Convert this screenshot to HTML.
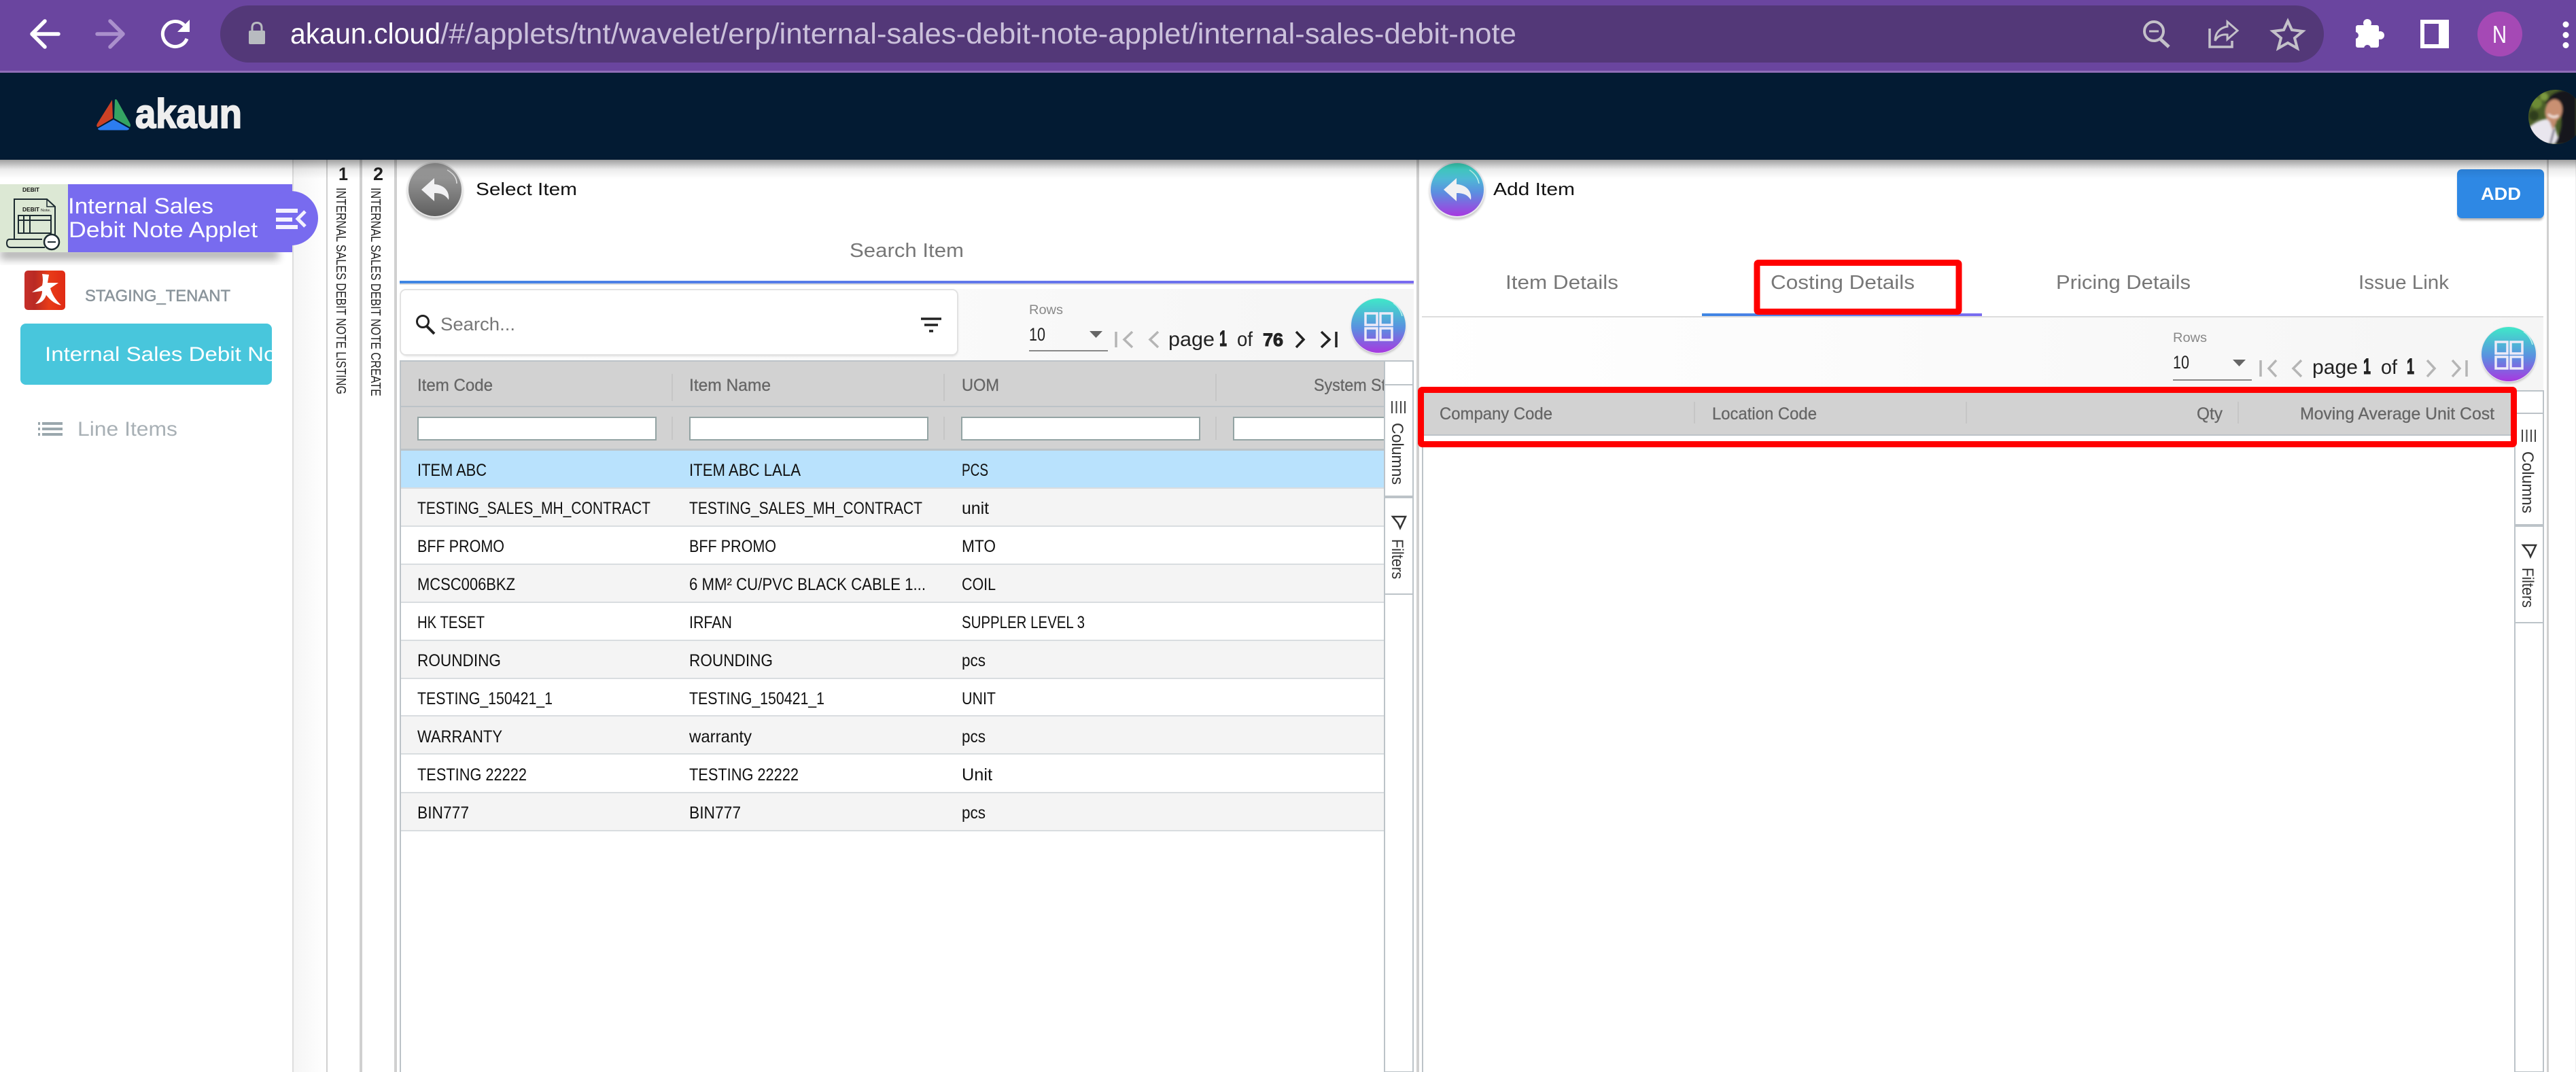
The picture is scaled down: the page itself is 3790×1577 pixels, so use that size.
<!DOCTYPE html>
<html lang="en">
<head>
<meta charset="utf-8">
<title>Internal Sales Debit Note</title>
<style>
html,body{margin:0;padding:0;background:#fff;width:3790px;height:1577px;overflow:hidden}
svg{display:block}
text{font-family:"Liberation Sans",sans-serif;white-space:pre}
.r{font-size:25px;fill:#111}
.h{font-size:25px;fill:#666;stroke:#666;stroke-width:.3px}
.t{font-size:29px;fill:#777}
.p{font-size:30px;fill:#222}
.b{font-size:32px;font-weight:bold;fill:#222;stroke:#222;stroke-width:1px}
.rw{font-size:19px;fill:#888}
.s{font-size:24px;fill:#333}
.v{font-size:20px;fill:#222}
</style>
</head>
<body>
<svg xmlns="http://www.w3.org/2000/svg" width="3790" height="1577" viewBox="0 0 3790 1577">
<defs>
<linearGradient id="gb" x1="0" y1="0" x2="1" y2="0"><stop offset="0" stop-color="#3f86e3"/><stop offset="1" stop-color="#7a6cf0"/></linearGradient>
<linearGradient id="gc" x1="0" y1="0" x2="0" y2="1"><stop offset="0" stop-color="#3fe8c8"/><stop offset=".55" stop-color="#5b8fe0"/><stop offset="1" stop-color="#a838e0"/></linearGradient>
<linearGradient id="gg" x1="0" y1="0" x2="0" y2="1"><stop offset="0" stop-color="#a8a8a8"/><stop offset="1" stop-color="#5f5f5f"/></linearGradient>
<linearGradient id="gs" x1="0" y1="0" x2="1" y2="0"><stop offset="0" stop-color="#fff"/><stop offset="1" stop-color="#f5f5f5"/></linearGradient>
<linearGradient id="gl" x1="0" y1="0" x2="1" y2="0"><stop offset="0" stop-color="#f5f5f5"/><stop offset="1" stop-color="#fff"/></linearGradient>
<linearGradient id="sh" x1="0" y1="0" x2="0" y2="1"><stop offset="0" stop-color="#000" stop-opacity=".38"/><stop offset=".5" stop-color="#000" stop-opacity=".08"/><stop offset="1" stop-color="#000" stop-opacity="0"/></linearGradient>
<linearGradient id="gt" x1="0" y1="0" x2="1" y2="0"><stop offset="0" stop-color="#c62f2a"/><stop offset=".25" stop-color="#b92a24"/><stop offset=".6" stop-color="#e83c18"/><stop offset="1" stop-color="#e02a14"/></linearGradient>
<filter id="bl" x="-20%" y="-50%" width="140%" height="200%"><feGaussianBlur stdDeviation="6"/></filter>
<filter id="b2" x="-30%" y="-30%" width="160%" height="160%"><feGaussianBlur stdDeviation="1.5"/></filter>
<clipPath id="ph"><circle cx="3760" cy="172" r="40"/></clipPath>
<clipPath id="tl"><rect x="30" y="476" width="370" height="90"/></clipPath>
<clipPath id="tb"><rect x="589" y="532" width="1447" height="130"/></clipPath>
<g id="reply"><path d="M-20 0L-1 -17V-8C14 -7 22 3 20 15C15 7 8 5 -1 5V17Z" fill="#f1f1f3"/></g>
<g id="grid"><circle cy="3" r="40" fill="#000" opacity=".22" filter="url(#b2)"/><circle r="41" fill="#e9e9ee"/><circle r="40" fill="url(#gc)"/><path d="M22 -33Q32 -26 35 -14" fill="none" stroke="#bdf5ee" stroke-width="1.5"/><g fill="none" stroke="#eceaf8" stroke-width="3.5"><rect x="-19" y="-18" width="17" height="17"/><rect x="3" y="-18" width="17" height="17"/><rect x="-19" y="4" width="17" height="17"/><rect x="3" y="4" width="17" height="17"/></g></g>
</defs>

<rect width="3790" height="1577" fill="#fff"/>

<!-- layout columns -->
<rect x="430" y="235" width="2" height="1342" fill="#ddd"/>
<rect x="432" y="235" width="48" height="1342" fill="url(#gl)"/>
<rect x="480" y="235" width="2" height="1342" fill="#d0d0d0"/>
<rect x="529" y="235" width="4" height="1342" fill="#d0d0d0"/>
<rect x="580" y="235" width="4" height="1342" fill="#d0d0d0"/>
<rect x="2084" y="235" width="4" height="1342" fill="#d0d0d0"/>
<rect x="3747" y="235" width="3" height="1342" fill="#d0d0d0"/>
<rect x="3789" y="235" width="1" height="1342" fill="#eee"/>

<!-- sidebar -->
<rect x="0" y="366" width="410" height="16" fill="#000" opacity=".3" filter="url(#bl)"/>
<rect x="100" y="271" width="330" height="100" fill="#786bef"/>
<circle cx="428" cy="321" r="40" fill="#786bef"/>
<rect x="0" y="271" width="100" height="100" fill="#dce8d4"/>
<text x="33" y="282" font-size="8" font-weight="bold" textLength="25" lengthAdjust="spacingAndGlyphs" fill="#111">DEBIT</text>
<path d="M21 352V293H69L81 304V345" fill="none" stroke="#1c2a30" stroke-width="2"/>
<path d="M69 293V304H81" fill="none" stroke="#1c2a30" stroke-width="1.5"/>
<text x="33" y="311" font-size="8" font-weight="bold" textLength="25" lengthAdjust="spacingAndGlyphs" fill="#111">DEBIT</text>
<text x="60" y="311" font-size="5" textLength="15" lengthAdjust="spacingAndGlyphs" fill="#222">Note.</text>
<path d="M27 317H75V343H27ZM27 324H75M35 317V343M44 317V343" fill="none" stroke="#1c2a30" stroke-width="2"/>
<path d="M62 352H14Q10 352 10 358Q10 364 16 364H66" fill="none" stroke="#1c2a30" stroke-width="2"/>
<circle cx="76" cy="356" r="11" fill="#fff" stroke="#1c2a30" stroke-width="2.5"/>
<path d="M70 356H82" stroke="#1c2a30" stroke-width="2"/>
<text x="100" y="314" font-size="32" fill="#fff" textLength="214" lengthAdjust="spacingAndGlyphs">Internal Sales</text>
<text x="101" y="349" font-size="32" fill="#fff" textLength="278" lengthAdjust="spacingAndGlyphs">Debit Note Applet</text>
<path d="M406 310H438M406 323H430M406 334H438" stroke="#f4f2ff" stroke-width="6"/>
<path d="M449 311L438 322L449 333" fill="none" stroke="#f4f2ff" stroke-width="5"/>

<rect x="36" y="398" width="60" height="58" rx="5" fill="url(#gt)"/>
<path d="M62 403L72 404L70 416L86 416L74 424Q78 438 90 449Q78 447 68 434Q64 446 52 447Q62 438 62 428L47 430L62 420Q64 412 62 403Z" fill="#fff"/>
<text x="125" y="443" font-size="24" fill="#8a949b" stroke="#8a949b" stroke-width=".5" textLength="214" lengthAdjust="spacingAndGlyphs">STAGING_TENANT</text>

<rect x="30" y="476" width="370" height="90" rx="8" fill="#48c6dc"/>
<g clip-path="url(#tl)"><text x="66" y="531" font-size="30" fill="#fff" textLength="368" lengthAdjust="spacingAndGlyphs">Internal Sales Debit Note</text></g>

<path d="M56 623H59M62 623H92M56 631H59M62 631H92M56 639H59M62 639H92" stroke="#9aa7ad" stroke-width="4"/>
<text x="114" y="641" font-size="30" fill="#a8b0b5" textLength="147" lengthAdjust="spacingAndGlyphs">Line Items</text>

<!-- step rail -->
<text x="498" y="265" font-size="27" font-weight="bold" fill="#222" textLength="14" lengthAdjust="spacingAndGlyphs">1</text>
<text x="549" y="265" font-size="27" font-weight="bold" fill="#222" textLength="15" lengthAdjust="spacingAndGlyphs">2</text>
<text class="v" transform="translate(495,276) rotate(90)" textLength="304" lengthAdjust="spacingAndGlyphs">INTERNAL SALES DEBIT NOTE LISTING</text>
<text class="v" transform="translate(546,276) rotate(90)" textLength="307" lengthAdjust="spacingAndGlyphs">INTERNAL SALES DEBIT NOTE CREATE</text>

<!-- left panel header -->
<circle cx="640" cy="282" r="41" fill="#000" opacity=".25" filter="url(#b2)"/>
<circle cx="640" cy="279" r="41" fill="#e8e8e8"/>
<circle cx="640" cy="279" r="39" fill="url(#gg)"/>
<path d="M658 250Q672 258 672 270" fill="none" stroke="#e0e0e0" stroke-width="1.5"/>
<use href="#reply" x="640" y="279"/>
<text x="700" y="287" font-size="26" fill="#111" textLength="149" lengthAdjust="spacingAndGlyphs">Select Item</text>
<text class="t" x="1250" y="378" textLength="168" lengthAdjust="spacingAndGlyphs">Search Item</text>
<rect x="588" y="413" width="1492" height="4" fill="url(#gb)"/>
<rect x="588" y="417" width="1492" height="2" fill="#ddd"/>
<rect x="588" y="425" width="1492" height="105" fill="url(#gs)"/>

<!-- search box -->
<rect x="591" y="430" width="818" height="94" rx="8" fill="#bbb" opacity=".5" filter="url(#b2)"/>
<rect x="589" y="426" width="820" height="96" rx="8" fill="#fff" stroke="#e2e2e2" stroke-width="2"/>
<circle cx="622" cy="473" r="8.5" fill="none" stroke="#222" stroke-width="3"/>
<path d="M628 480L639 491" stroke="#222" stroke-width="4"/>
<text x="648" y="486" font-size="27" fill="#777" textLength="110" lengthAdjust="spacingAndGlyphs">Search...</text>
<path d="M1355 469H1385M1360 478H1380M1367 487H1373" stroke="#222" stroke-width="3.5"/>

<!-- left pager -->
<text class="rw" x="1514" y="462" textLength="50" lengthAdjust="spacingAndGlyphs">Rows</text>
<text class="p" x="1514" y="501" style="font-size:27px" textLength="24" lengthAdjust="spacingAndGlyphs">10</text>
<path d="M1603 487H1622L1612.500 497Z" fill="#666"/>
<rect x="1514" y="515" width="116" height="2" fill="#888"/>
<g fill="none" stroke="#b5b5b5" stroke-width="3.5"><path d="M1642 488V511M1666 488L1654 499.500L1666 511M1704 488L1692 499.500L1704 511"/></g>
<text class="p" x="1719" y="509" textLength="68" lengthAdjust="spacingAndGlyphs">page</text>
<text class="b" x="1794" y="509" textLength="11" lengthAdjust="spacingAndGlyphs">1</text>
<text class="p" x="1820" y="509" textLength="23" lengthAdjust="spacingAndGlyphs">of</text>
<text class="b" x="1858" y="509" style="font-size:27px" textLength="30" lengthAdjust="spacingAndGlyphs">76</text>
<g fill="none" stroke="#222" stroke-width="3.5"><path d="M1907 488L1918 499.500L1907 511M1944 488L1956 499.500L1944 511M1966 488V511"/></g>
<use href="#grid" x="2028" y="479"/>

<!-- left table -->
<rect x="589" y="530" width="1447" height="132" fill="#d2d2d2"/>
<rect x="589" y="530" width="1447" height="2" fill="#bcc3c8"/>
<rect x="589" y="597" width="1447" height="2" fill="#bcc3c8"/>
<rect x="589" y="660" width="1447" height="3" fill="#bcc3c8"/>
<rect x="588" y="530" width="2" height="1047" fill="#bcc3c8"/>
<g fill="#c6c6c6"><rect x="988" y="550" width="2" height="40"/><rect x="1388" y="550" width="2" height="40"/><rect x="1788" y="550" width="2" height="40"/><rect x="988" y="613" width="2" height="34"/><rect x="1388" y="613" width="2" height="34"/><rect x="1788" y="613" width="2" height="34"/></g>
<text class="h" x="614" y="575" textLength="111" lengthAdjust="spacingAndGlyphs">Item Code</text>
<text class="h" x="1014" y="575" textLength="120" lengthAdjust="spacingAndGlyphs">Item Name</text>
<text class="h" x="1415" y="575" textLength="55" lengthAdjust="spacingAndGlyphs">UOM</text>
<g clip-path="url(#tb)"><text class="h" x="1933" y="575" textLength="150" lengthAdjust="spacingAndGlyphs">System Status</text>
<g fill="#fff" stroke="#93a3a3" stroke-width="2"><rect x="615" y="614" width="350" height="33"/><rect x="1015" y="614" width="350" height="33"/><rect x="1415" y="614" width="350" height="33"/><rect x="1815" y="614" width="350" height="33"/></g></g>

<rect x="590" y="663" width="1446" height="54" fill="#b9e2fd"/>
<rect x="590" y="719" width="1446" height="54" fill="#f4f4f4"/>
<rect x="590" y="831" width="1446" height="54" fill="#f4f4f4"/>
<rect x="590" y="943" width="1446" height="54" fill="#f4f4f4"/>
<rect x="590" y="1054" width="1446" height="54" fill="#f4f4f4"/>
<rect x="590" y="1167" width="1446" height="54" fill="#f4f4f4"/>
<g fill="#d9dde0"><rect x="590" y="717" width="1446" height="2"/><rect x="590" y="773" width="1446" height="2"/><rect x="590" y="829" width="1446" height="2"/><rect x="590" y="885" width="1446" height="2"/><rect x="590" y="941" width="1446" height="2"/><rect x="590" y="997" width="1446" height="2"/><rect x="590" y="1052" width="1446" height="2"/><rect x="590" y="1108" width="1446" height="2"/><rect x="590" y="1165" width="1446" height="2"/><rect x="590" y="1221" width="1446" height="2"/></g>

<text class="r" x="614" y="700" textLength="102" lengthAdjust="spacingAndGlyphs">ITEM ABC</text>
<text class="r" x="1014" y="700" textLength="164" lengthAdjust="spacingAndGlyphs">ITEM ABC LALA</text>
<text class="r" x="1415" y="700" textLength="39" lengthAdjust="spacingAndGlyphs">PCS</text>
<text class="r" x="614" y="756" textLength="343" lengthAdjust="spacingAndGlyphs">TESTING_SALES_MH_CONTRACT</text>
<text class="r" x="1014" y="756" textLength="343" lengthAdjust="spacingAndGlyphs">TESTING_SALES_MH_CONTRACT</text>
<text class="r" x="1415" y="756" textLength="40" lengthAdjust="spacingAndGlyphs">unit</text>
<text class="r" x="614" y="812" textLength="128" lengthAdjust="spacingAndGlyphs">BFF PROMO</text>
<text class="r" x="1014" y="812" textLength="128" lengthAdjust="spacingAndGlyphs">BFF PROMO</text>
<text class="r" x="1415" y="812" textLength="50" lengthAdjust="spacingAndGlyphs">MTO</text>
<text class="r" x="614" y="868" textLength="144" lengthAdjust="spacingAndGlyphs">MCSC006BKZ</text>
<text class="r" x="1014" y="868" textLength="348" lengthAdjust="spacingAndGlyphs">6 MM² CU/PVC BLACK CABLE 1...</text>
<text class="r" x="1415" y="868" textLength="50" lengthAdjust="spacingAndGlyphs">COIL</text>
<text class="r" x="614" y="924" textLength="99" lengthAdjust="spacingAndGlyphs">HK TESET</text>
<text class="r" x="1014" y="924" textLength="63" lengthAdjust="spacingAndGlyphs">IRFAN</text>
<text class="r" x="1415" y="924" textLength="181" lengthAdjust="spacingAndGlyphs">SUPPLER LEVEL 3</text>
<text class="r" x="614" y="980" textLength="123" lengthAdjust="spacingAndGlyphs">ROUNDING</text>
<text class="r" x="1014" y="980" textLength="123" lengthAdjust="spacingAndGlyphs">ROUNDING</text>
<text class="r" x="1415" y="980" textLength="35" lengthAdjust="spacingAndGlyphs">pcs</text>
<text class="r" x="614" y="1036" textLength="199" lengthAdjust="spacingAndGlyphs">TESTING_150421_1</text>
<text class="r" x="1014" y="1036" textLength="199" lengthAdjust="spacingAndGlyphs">TESTING_150421_1</text>
<text class="r" x="1415" y="1036" textLength="50" lengthAdjust="spacingAndGlyphs">UNIT</text>
<text class="r" x="614" y="1092" textLength="125" lengthAdjust="spacingAndGlyphs">WARRANTY</text>
<text class="r" x="1014" y="1092" textLength="92" lengthAdjust="spacingAndGlyphs">warranty</text>
<text class="r" x="1415" y="1092" textLength="35" lengthAdjust="spacingAndGlyphs">pcs</text>
<text class="r" x="614" y="1148" textLength="161" lengthAdjust="spacingAndGlyphs">TESTING 22222</text>
<text class="r" x="1014" y="1148" textLength="161" lengthAdjust="spacingAndGlyphs">TESTING 22222</text>
<text class="r" x="1415" y="1148" textLength="45" lengthAdjust="spacingAndGlyphs">Unit</text>
<text class="r" x="614" y="1204" textLength="76" lengthAdjust="spacingAndGlyphs">BIN777</text>
<text class="r" x="1014" y="1204" textLength="76" lengthAdjust="spacingAndGlyphs">BIN777</text>
<text class="r" x="1415" y="1204" textLength="35" lengthAdjust="spacingAndGlyphs">pcs</text>

<!-- left tool panel -->
<rect x="2037" y="531" width="42" height="1046" fill="#fff" stroke="#bcc3c8" stroke-width="2"/>
<rect x="2037" y="565" width="42" height="2" fill="#bcc3c8"/>
<rect x="2037" y="729" width="42" height="4" fill="#bcc3c8"/>
<rect x="2037" y="873" width="42" height="2" fill="#bcc3c8"/>
<path d="M2048 590V608M2054.500 590V608M2061 590V608M2067 590V608" stroke="#444" stroke-width="2"/>
<text class="s" transform="translate(2048,622) rotate(90)" textLength="91" lengthAdjust="spacingAndGlyphs">Columns</text>
<path d="M2049 760H2068L2060 777L2057 770Z" fill="none" stroke="#333" stroke-width="2.5"/>
<text class="s" transform="translate(2048,793) rotate(90)" textLength="59" lengthAdjust="spacingAndGlyphs">Filters</text>

<!-- right panel header -->
<circle cx="2144" cy="282" r="41" fill="#000" opacity=".22" filter="url(#b2)"/>
<circle cx="2144" cy="279" r="41" fill="#e9e9ee"/>
<circle cx="2144" cy="279" r="39" fill="url(#gc)"/>
<path d="M2162 250Q2174 258 2176 270" fill="none" stroke="#bdf5ee" stroke-width="1.5"/>
<use href="#reply" x="2144" y="279"/>
<text x="2197" y="287" font-size="26" fill="#111" textLength="120" lengthAdjust="spacingAndGlyphs">Add Item</text>
<rect x="3616" y="253" width="126" height="71" rx="6" fill="#000" opacity=".3" filter="url(#b2)"/>
<rect x="3615" y="249" width="128" height="72" rx="7" fill="#2e88e4"/>
<text x="3650" y="294" font-size="26" font-weight="bold" fill="#fff" textLength="59" lengthAdjust="spacingAndGlyphs">ADD</text>

<!-- tabs -->
<text class="t" x="2215" y="425" textLength="166" lengthAdjust="spacingAndGlyphs">Item Details</text>
<text class="t" x="2605" y="425" textLength="212" lengthAdjust="spacingAndGlyphs">Costing Details</text>
<text class="t" x="3025" y="425" textLength="198" lengthAdjust="spacingAndGlyphs">Pricing Details</text>
<text class="t" x="3470" y="425" textLength="133" lengthAdjust="spacingAndGlyphs">Issue Link</text>
<rect x="2092" y="465" width="1650" height="2" fill="#ddd"/>
<rect x="2504" y="461" width="412" height="4" fill="url(#gb)"/>
<rect x="2092" y="467" width="1650" height="107" fill="url(#gs)"/>

<!-- right pager -->
<text class="rw" x="3197" y="503" textLength="50" lengthAdjust="spacingAndGlyphs">Rows</text>
<text class="p" x="3197" y="542" style="font-size:27px" textLength="24" lengthAdjust="spacingAndGlyphs">10</text>
<path d="M3285 529H3304L3294.500 539Z" fill="#666"/>
<rect x="3197" y="558" width="116" height="2" fill="#888"/>
<g fill="none" stroke="#b5b5b5" stroke-width="3.5"><path d="M3326 530V554M3349 530L3338 542L3349 554M3386 530L3374 542L3386 554"/></g>
<text class="p" x="3402" y="550" textLength="67" lengthAdjust="spacingAndGlyphs">page</text>
<text class="b" x="3477" y="550" textLength="11" lengthAdjust="spacingAndGlyphs">1</text>
<text class="p" x="3503" y="550" textLength="24" lengthAdjust="spacingAndGlyphs">of</text>
<text class="b" x="3541" y="550" textLength="11" lengthAdjust="spacingAndGlyphs">1</text>
<g fill="none" stroke="#b5b5b5" stroke-width="3.5"><path d="M3571 530L3582 542L3571 554M3608 530L3619 542L3608 554M3629 530V554"/></g>
<use href="#grid" x="3691" y="521"/>

<!-- right grid -->
<rect x="2092" y="640" width="2" height="937" fill="#bcc3c8"/>
<rect x="3700" y="575" width="42" height="1002" fill="#fff" stroke="#bcc3c8" stroke-width="2"/>
<rect x="3700" y="607" width="42" height="2" fill="#bcc3c8"/>
<rect x="3700" y="771" width="42" height="4" fill="#bcc3c8"/>
<rect x="3700" y="915" width="42" height="2" fill="#bcc3c8"/>
<path d="M3711 632V650M3717.500 632V650M3724 632V650M3730 632V650" stroke="#444" stroke-width="2"/>
<text class="s" transform="translate(3711,664) rotate(90)" textLength="91" lengthAdjust="spacingAndGlyphs">Columns</text>
<path d="M3712 802H3731L3723 819L3720 812Z" fill="none" stroke="#333" stroke-width="2.5"/>
<text class="s" transform="translate(3711,835) rotate(90)" textLength="59" lengthAdjust="spacingAndGlyphs">Filters</text>

<rect x="2095" y="578" width="1599" height="71" fill="#fff"/>
<rect x="2095" y="578" width="1599" height="61" fill="#d2d2d2"/>
<rect x="2095" y="639" width="1599" height="2" fill="#bcc3c8"/>
<g fill="#c6c6c6"><rect x="2492" y="591" width="2" height="32"/><rect x="2892" y="591" width="2" height="32"/><rect x="3292" y="591" width="2" height="32"/></g>
<text class="h" x="2118" y="617" textLength="166" lengthAdjust="spacingAndGlyphs">Company Code</text>
<text class="h" x="2519" y="617" textLength="154" lengthAdjust="spacingAndGlyphs">Location Code</text>
<text class="h" x="3232" y="617" textLength="38" lengthAdjust="spacingAndGlyphs">Qty</text>
<text class="h" x="3384" y="617" textLength="286" lengthAdjust="spacingAndGlyphs">Moving Average Unit Cost</text>

<!-- annotation boxes -->
<rect x="2585" y="386.500" width="297" height="72" rx="2" fill="none" stroke="#ff0000" stroke-width="9"/>
<rect x="2090.500" y="573.500" width="1608" height="80" rx="2" fill="none" stroke="#ff0000" stroke-width="9"/>

<!-- nav shadow -->
<rect x="0" y="235" width="3790" height="28" fill="url(#sh)"/>

<!-- browser chrome -->
<rect x="0" y="0" width="3790" height="104" fill="#6a459f"/>
<rect x="0" y="104" width="3790" height="3" fill="#8f6db8"/>
<rect x="324" y="8" width="3095" height="84" rx="42" fill="#533878"/>
<path d="M86 50H48M66 31L47 50L66 69" fill="none" stroke="#fff" stroke-width="5.500" stroke-linecap="round" stroke-linejoin="round"/>
<path d="M143 50H181M162 31L181 50L162 69" fill="none" stroke="#aa90cc" stroke-width="5.500" stroke-linecap="round" stroke-linejoin="round"/>
<path d="M275 57A18.500 18.500 0 1 1 271 37" fill="none" stroke="#fff" stroke-width="5"/>
<path d="M279 29V47H261Z" fill="#fff"/>
<rect x="366" y="45" width="24" height="20" rx="2" fill="#b8bbc0"/>
<path d="M371 46V41Q371 33.500 378 33.500Q385 33.500 385 41V46" fill="none" stroke="#b8bbc0" stroke-width="3"/>
<text x="427" y="64" font-size="43" fill="#fff" textLength="221" lengthAdjust="spacingAndGlyphs">akaun.cloud</text>
<text x="648" y="64" font-size="43" fill="#cbc1db" textLength="1583" lengthAdjust="spacingAndGlyphs">/#/applets/tnt/wavelet/erp/internal-sales-debit-note-applet/internal-sales-debit-note</text>

<g fill="none" stroke="#c4c1c9">
<circle cx="3169" cy="46" r="14" stroke-width="4"/>
<path d="M3179 58L3191 69" stroke-width="5"/>
<path d="M3162 46H3176" stroke-width="3"/>
<path d="M3251 42V69H3284V60" stroke-width="3.500"/>
<path d="M3277 32L3292 45L3277 58V51C3268 50 3262 54 3259 60C3259 48 3266 41 3277 39Z" stroke-width="3"/>
<path d="M3366 31L3372 44L3388 46L3376 56L3380 71L3366 63L3352 71L3356 56L3344 46L3360 44Z" stroke-width="4"/>
</g>
<rect x="3466" y="37" width="34" height="33" rx="3" fill="#fff"/>
<circle cx="3483" cy="34" r="6" fill="#fff"/>
<circle cx="3502" cy="52" r="6" fill="#fff"/>
<circle cx="3465" cy="52" r="5" fill="#6a459f"/>
<circle cx="3483" cy="71" r="5" fill="#6a459f"/>
<rect x="3561" y="29" width="42" height="42" fill="#fff"/>
<rect x="3567" y="35" width="21" height="30" fill="#6a459f"/>
<circle cx="3678" cy="50" r="33" fill="#a549b5"/>
<text x="3667" y="63" font-size="36" fill="#fff" textLength="21" lengthAdjust="spacingAndGlyphs">N</text>
<circle cx="3775" cy="36" r="4.500" fill="#fff"/>
<circle cx="3775" cy="51.500" r="4.500" fill="#fff"/>
<circle cx="3775" cy="66.500" r="4.500" fill="#fff"/>

<!-- app nav -->
<rect x="0" y="107" width="3790" height="128" fill="#031b33"/>
<path d="M165 147L166 174L144 187Q141 186 143 182Z" fill="#cc4125"/>
<path d="M169 147L168 174L191 187Q193 185 191 181L172 147Q170 145 169 147Z" fill="#34a463"/>
<path d="M167 176L190 189Q190 191 187 191.500H147Q144 191 144 189Z" fill="#2c7df0"/>
<text x="199" y="188" font-size="60" font-weight="bold" fill="#eee" stroke="#eee" stroke-width="2" textLength="157" lengthAdjust="spacingAndGlyphs">akaun</text>

<!-- profile photo -->
<g clip-path="url(#ph)">
<rect x="3720" y="132" width="70" height="80" fill="#4a5d28"/>
<g filter="url(#b2)">
<circle cx="3732" cy="152" r="8" fill="#6c8a35"/>
<circle cx="3743" cy="142" r="6" fill="#7d9a40"/>
<circle cx="3728" cy="170" r="7" fill="#2f3d1a"/>
<path d="M3722 186Q3740 172 3756 176L3766 212H3722Z" fill="#e9e6ee"/>
<path d="M3745 152Q3755 130 3790 132V212H3758Q3772 190 3768 170Z" fill="#15171c"/>
<ellipse cx="3757" cy="163" rx="12.500" ry="17" fill="#c99072" transform="rotate(12 3757 163)"/>
<path d="M3749 168Q3756 175 3764 170" stroke="#f4e8e2" stroke-width="3" fill="none"/>
<path d="M3750 176L3762 179L3756 192Z" fill="#c08a6c"/>
<path d="M3758 190L3752 212" stroke="#6d6a80" stroke-width="3"/>
</g>
</g>
</svg>
</body>
</html>
